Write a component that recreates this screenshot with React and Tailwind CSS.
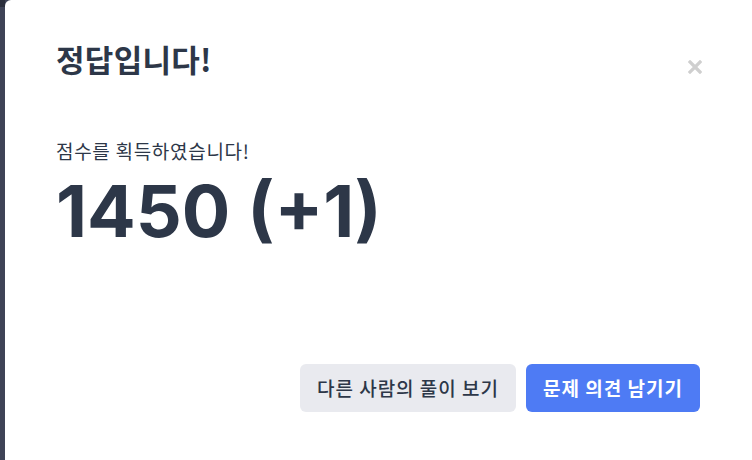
import React from "react";

const kr = { fontFamily: "'Noto Sans CJK KR', sans-serif" };

export default function App() {
  return (
    <div className="w-[752px] h-[460px] flex bg-[#3e4356] overflow-hidden" style={{ fontFamily: "Inter, 'Noto Sans CJK KR', sans-serif" }}>
      <div className="w-[5px] flex flex-col">
        <div className="h-[7px] bg-[#2b2f3c]" />
        <div className="flex-1" />
      </div>
      <div className="flex-1 bg-white rounded-tl-[6px] relative flex flex-col pl-[51px] pr-[52px] text-[#2d3748]">
        <h1 className="mt-[40px] text-[31px] leading-[38px] font-bold tracking-[0.3px]" style={kr}>정답입니다!</h1>
        <button className="absolute right-[50px] top-[60px] w-[14px] h-[14px] text-[#cfcfcf]">
          <svg viewBox="0 0 14 14" width="14" height="14">
            <path d="M2 2 L12 12 M12 2 L2 12" stroke="currentColor" strokeWidth="3.2" strokeLinecap="square" />
          </svg>
        </button>
        <p className="mt-[61px] text-[19px] leading-[24px] tracking-[0.7px]" style={kr}>점수를 획득하였습니다!</p>
        <p className="mt-[8px] text-[72px] leading-[80px] font-bold">1450 (+1)</p>
        <div className="mt-auto mb-[48px] flex justify-end gap-[10px]">
          <button className="h-[48px] w-[216px] rounded-[6px] bg-[#e9eaef] text-[19px] font-medium tracking-[1px] text-[#2d3748]" style={kr}>다른 사람의 풀이 보기</button>
          <button className="h-[48px] w-[174px] rounded-[6px] bg-[#4e7bf4] text-[19px] font-bold tracking-[1px] text-white" style={kr}>문제 의견 남기기</button>
        </div>
      </div>
    </div>
  );
}
